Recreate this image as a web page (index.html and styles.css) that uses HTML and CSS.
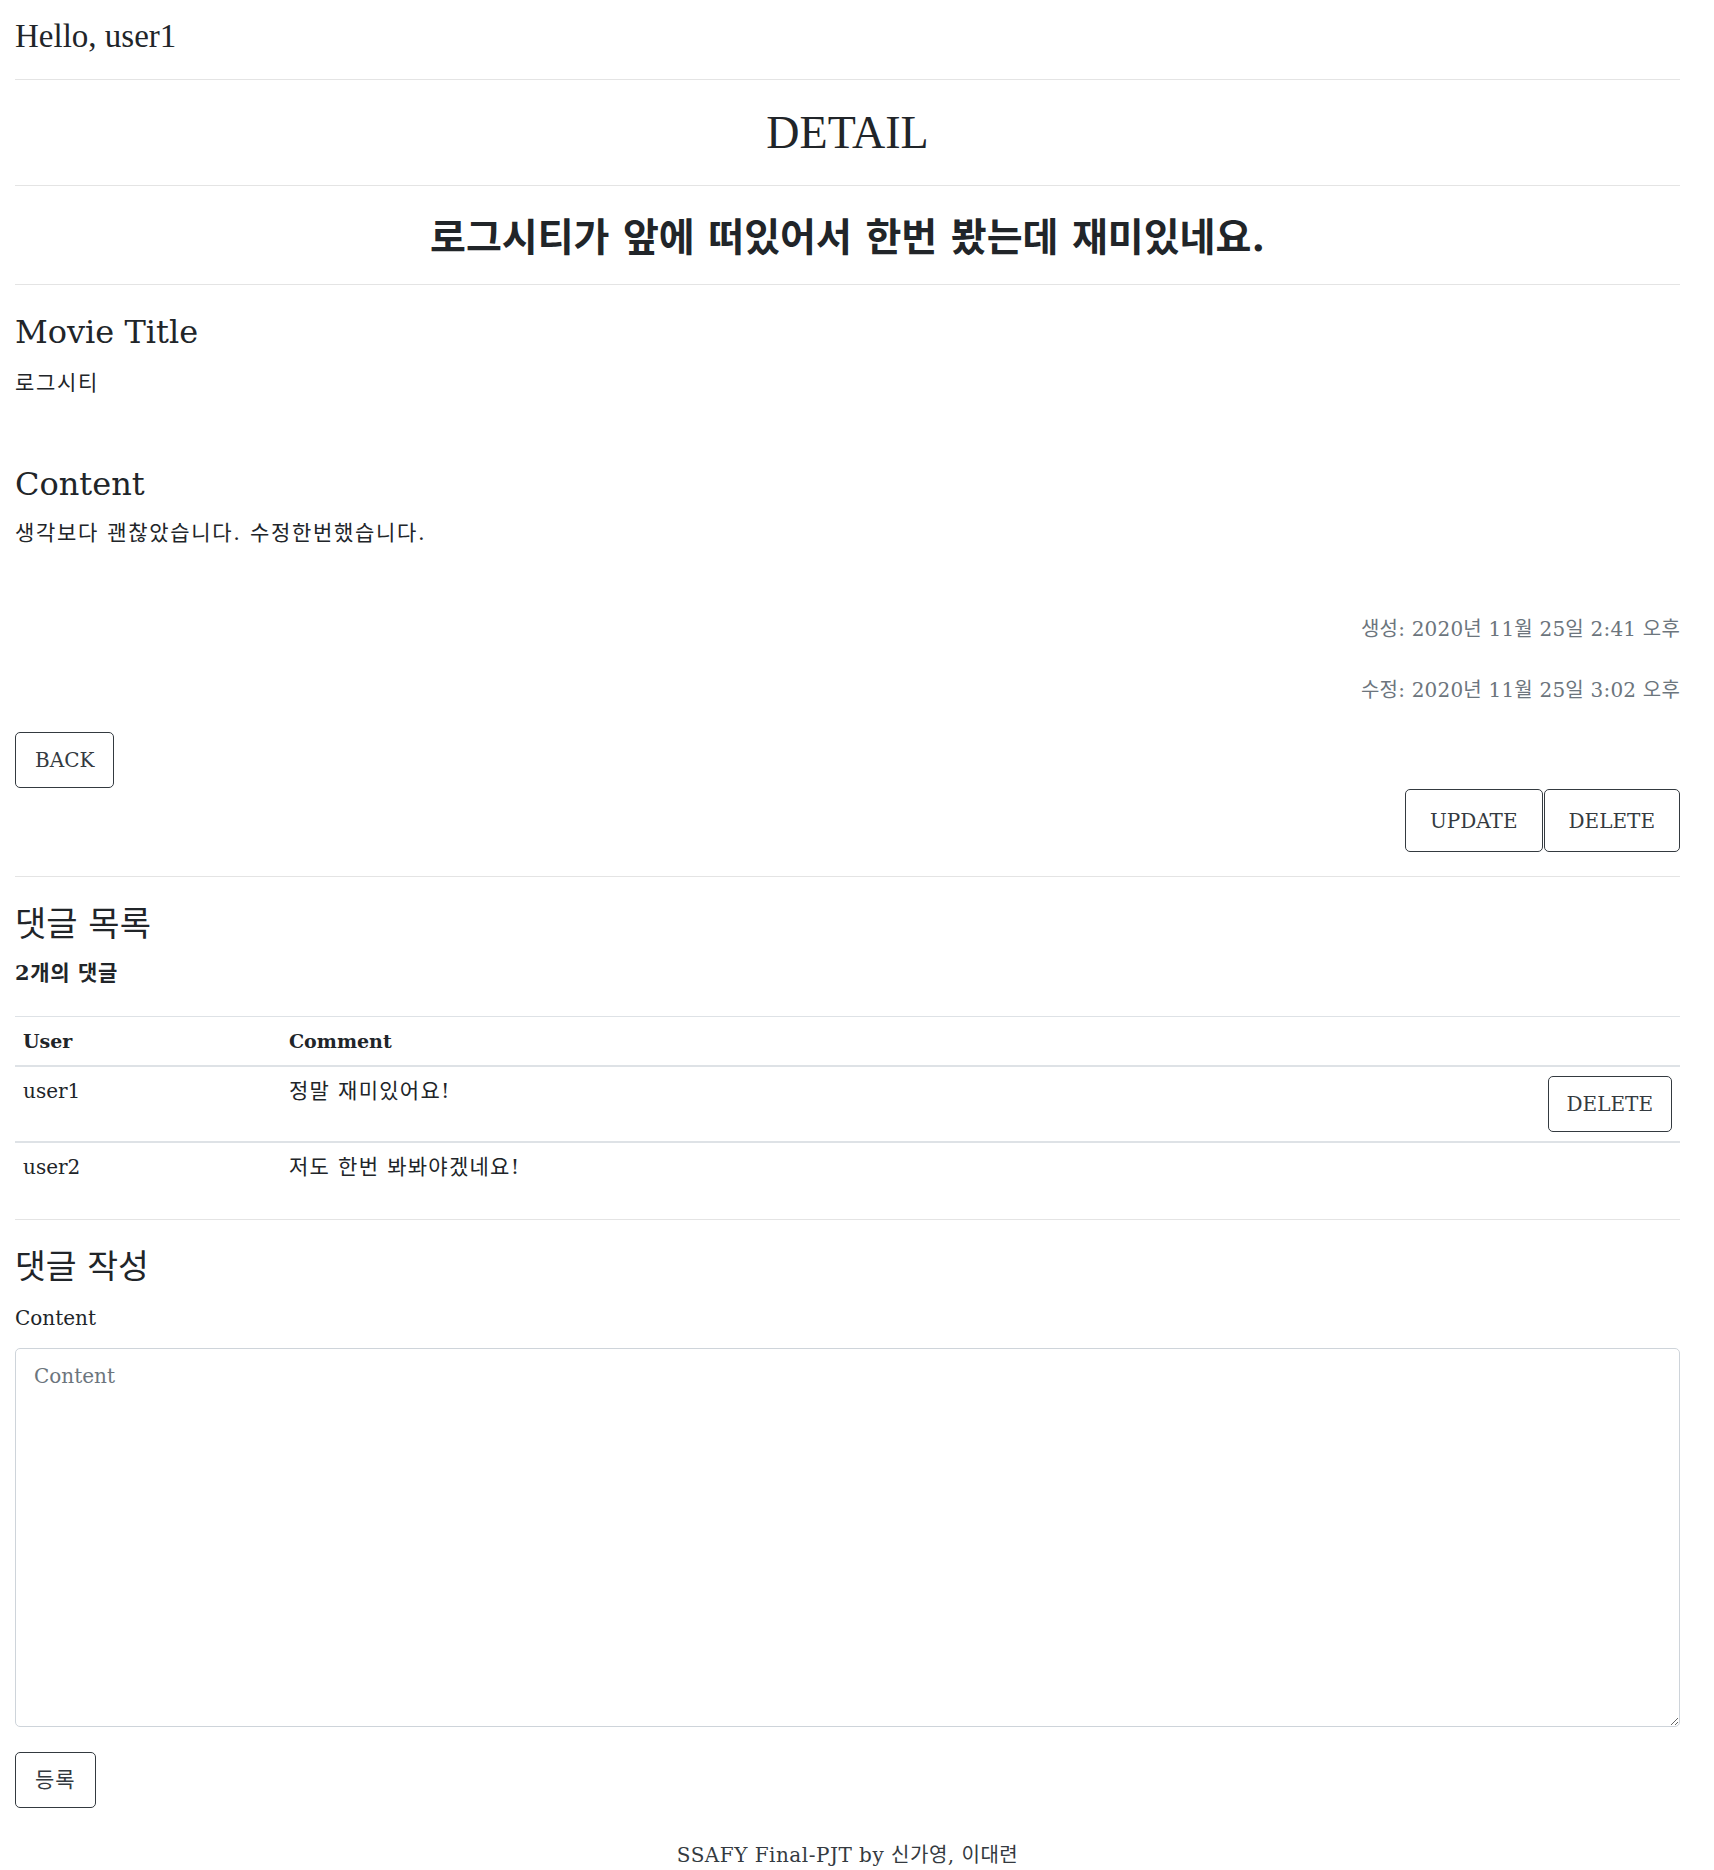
FILE: index.html
```html
<!DOCTYPE html>
<html lang="ko">
<head>
<meta charset="utf-8">
<title>DETAIL</title>
<link rel="stylesheet" href="styles.css">
</head>
<body>
<div class="page">
  <nav class="greeting">Hello, user1</nav>
  <hr class="rule rule-nav">

  <h1 class="page-title">DETAIL</h1>
  <hr class="rule rule-title">

  <h1 class="review-title">로그시티가 앞에 떠있어서 한번 봤는데 재미있네요.</h1>
  <hr class="rule rule-review">

  <section class="field">
    <h3 class="field-label">Movie Title</h3>
    <p class="field-value ko">로그시티</p>
  </section>

  <section class="field field-content">
    <h3 class="field-label">Content</h3>
    <p class="field-value ko">생각보다 괜찮았습니다. 수정한번했습니다.</p>
  </section>

  <p class="stamp stamp-created">생성: 2020년 11월 25일 2:41 오후</p>
  <p class="stamp stamp-updated">수정: 2020년 11월 25일 3:02 오후</p>

  <div class="back-row">
    <button class="btn" type="button">BACK</button>
  </div>

  <div class="owner-actions">
    <button class="btn btn-wide" type="button">UPDATE</button>
    <button class="btn btn-wide" type="button">DELETE</button>
  </div>

  <hr class="rule rule-comments">

  <h3 class="section-title">댓글 목록</h3>
  <p class="count">2개의 댓글</p>

  <table class="comments">
    <thead>
      <tr>
        <th class="col-user">User</th>
        <th class="col-comment">Comment</th>
        <th class="col-action"></th>
      </tr>
    </thead>
    <tbody>
      <tr class="row-mine">
        <td>user1</td>
        <td class="ko ko-cell">정말 재미있어요!</td>
        <td class="col-action"><button class="btn" type="button">DELETE</button></td>
      </tr>
      <tr>
        <td>user2</td>
        <td class="ko ko-cell">저도 한번 봐봐야겠네요!</td>
        <td class="col-action"></td>
      </tr>
    </tbody>
  </table>

  <hr class="rule rule-form">

  <h3 class="section-title section-title-form">댓글 작성</h3>
  <form class="comment-form">
    <label class="form-label" for="content">Content</label>
    <textarea id="content" class="form-input" placeholder="Content"></textarea>
    <button class="btn btn-submit" type="button">등록</button>
  </form>

  <footer class="footer">SSAFY Final-PJT by 신가영, 이대련</footer>
</div>
</body>
</html>
```
FILE: styles.css
```css
html, body {
  margin: 0;
  padding: 0;
  background: #ffffff;
}

body {
  font-family: "DejaVu Serif", "Noto Sans CJK KR", serif;
  font-size: 20px;
  line-height: 30px;
  color: #212529;
}

.page {
  padding: 16px 34px 0 15px;
}

p, h1, h3 {
  margin: 0;
}

.ko {
  font-size: 21px;
  letter-spacing: 0.08em;
}

.ko-cell {
  letter-spacing: 0.06em;
}

/* nav */
.greeting {
  font-family: "Liberation Serif", "Noto Sans CJK KR", serif;
  font-size: 33px;
  line-height: 40px;
}

.rule {
  border: 0;
  border-top: 1px solid #e4e4e4;
  height: 0;
  margin: 0;
}

.rule-nav { margin-top: 23px; }
.rule-title { margin-top: 25px; }
.rule-review { margin-top: 23px; }
.rule-comments { margin-top: 24px; }
.rule-form { margin-top: 28px; }

.page-title {
  margin-top: 26px;
  font-family: "Liberation Serif", serif;
  font-size: 46px;
  line-height: 54px;
  font-weight: 400;
  text-align: center;
}

.review-title {
  margin-top: 28px;
  font-family: "DejaVu Serif", "Noto Sans CJK KR", serif;
  font-size: 39px;
  line-height: 47px;
  font-weight: 700;
  text-align: center;
}

/* fields */
.field {
  margin-top: 28px;
}

.field-content {
  margin-top: 67px;
}

.field-label {
  font-size: 32px;
  line-height: 38px;
  font-weight: 400;
}

.field-value {
  margin-top: 17px;
}

.field-content .field-value {
  margin-top: 15px;
}

.stamp {
  font-size: 20px;
  line-height: 30px;
  letter-spacing: 0.01em;
  color: #6c757d;
  text-align: right;
}

.stamp-created { margin-top: 66px; }
.stamp-updated { margin-top: 31px; }

/* buttons */
.btn {
  font-family: "DejaVu Serif", "Noto Sans CJK KR", serif;
  font-size: 20px;
  line-height: 30px;
  color: #343a40;
  background: transparent;
  border: 1px solid #343a40;
  border-radius: 5px;
  padding: 12px 19px;
  margin: 0;
  cursor: pointer;
}

.back-row {
  margin-top: 27px;
  display: flex;
}

.owner-actions {
  margin-top: 1px;
  display: flex;
  justify-content: flex-end;
}

.btn-wide {
  padding: 15.5px 24px;
}

.btn-wide + .btn-wide {
  margin-left: 1px;
}

/* comments */
.section-title {
  margin-top: 28px;
  font-size: 34px;
  line-height: 38px;
  font-weight: 400;
}

.count {
  margin-top: 15px;
  font-size: 21px;
  letter-spacing: 0.03em;
  font-weight: 700;
}

.comments {
  margin-top: 28px;
  width: 100%;
  border-collapse: separate;
  border-spacing: 0;
}

.comments th,
.comments td {
  padding: 9px 8px;
  text-align: left;
  vertical-align: top;
}

.comments th {
  font-size: 19px;
  font-weight: 700;
  border-top: 1px solid #dee2e6;
  border-bottom: 2px solid #dee2e6;
}

.comments .col-user {
  width: 250px;
}

.comments .col-action {
  text-align: right;
}

.comments .btn {
  padding: 12px 18px;
}

.row-mine td {
  border-bottom: 2px solid #dee2e6;
}

/* form */
.section-title-form {
  margin-top: 28px;
  font-size: 33.5px;
}

.comment-form {
  margin: 0;
}

.form-label {
  display: block;
  margin-top: 17px;
}

.form-input {
  display: block;
  box-sizing: border-box;
  width: 100%;
  height: 379px;
  margin: 15px 0 0;
  padding: 12px 18px;
  font-family: "DejaVu Serif", "Noto Sans CJK KR", serif;
  font-size: 20px;
  line-height: 30px;
  color: #495057;
  border: 1px solid #ced4da;
  border-radius: 5px;
  background: #ffffff;
}

.form-input::placeholder {
  color: #6c757d;
}

.btn-submit {
  display: block;
  margin-top: 25px;
  font-size: 21px;
  letter-spacing: 0.05em;
}

.footer {
  margin-top: 32px;
  text-align: center;
  color: #343a40;
  line-height: 30px;
  letter-spacing: 0.5px;
}
```
